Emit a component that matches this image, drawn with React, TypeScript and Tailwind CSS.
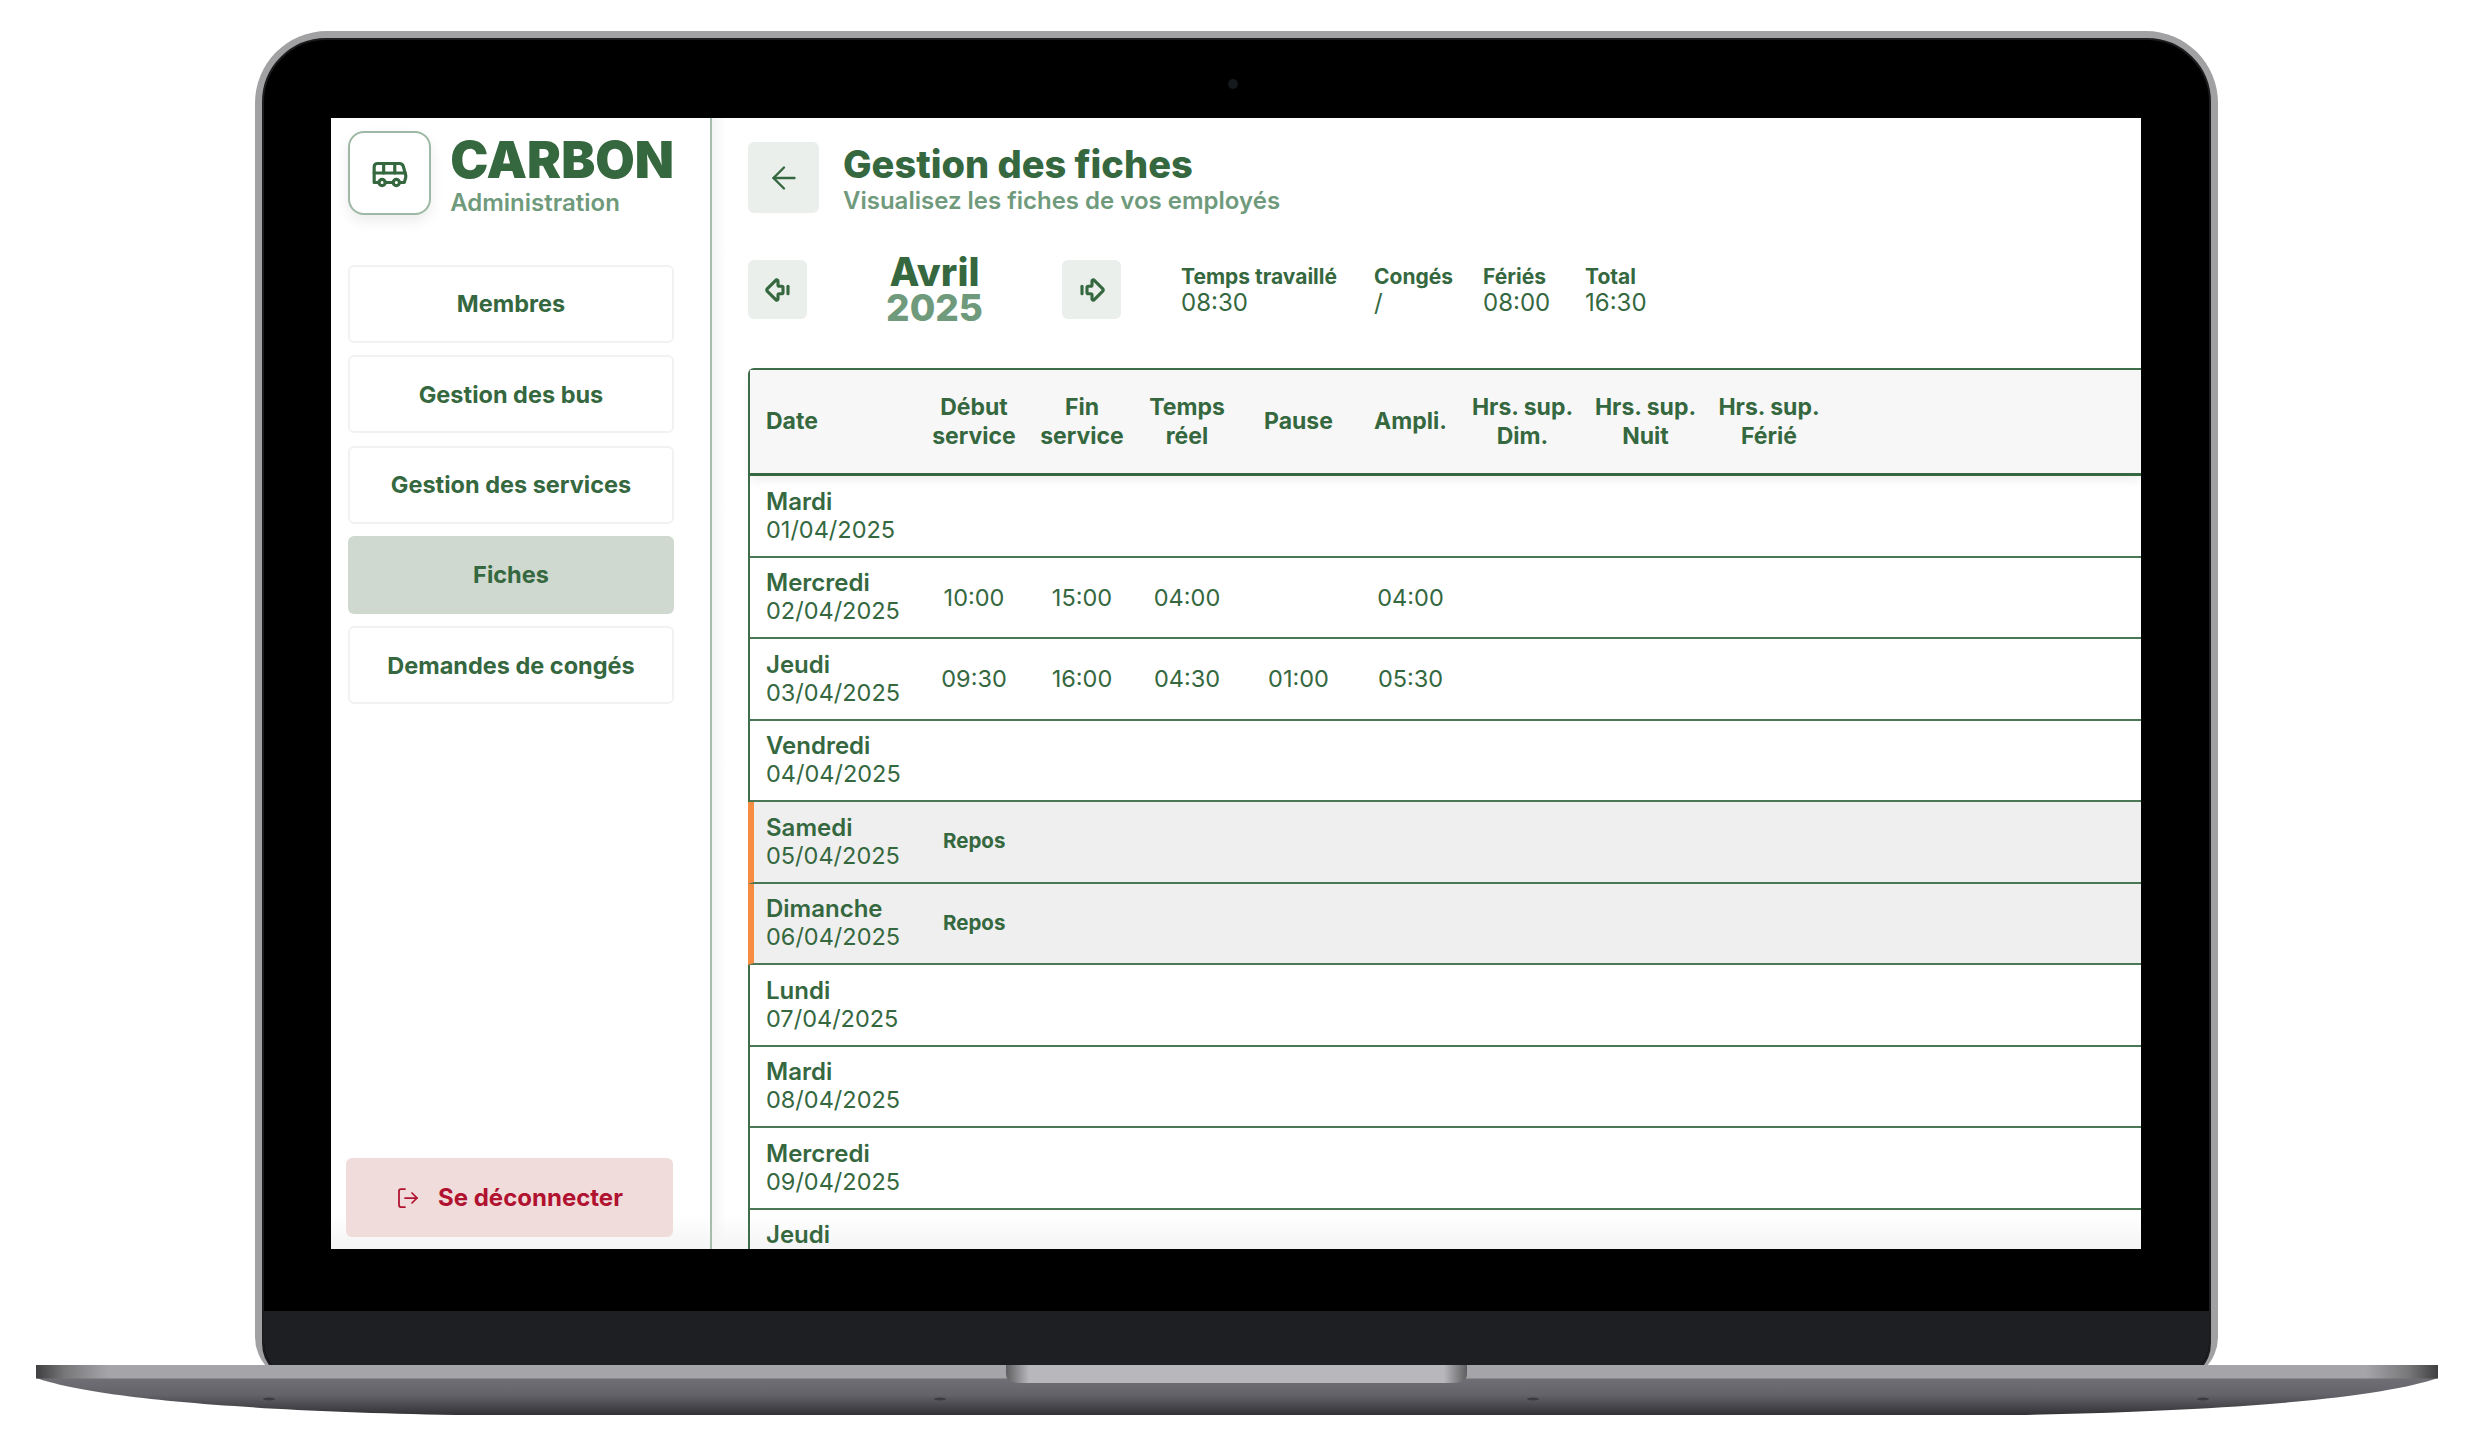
import { ArrowBigLeftDash, ArrowBigRightDash, ArrowLeft, Bus, LogOut } from "lucide-react";

const nav = ["Membres", "Gestion des bus", "Gestion des services", "Fiches", "Demandes de congés"];
const cols = "grid grid-cols-[171px_106px_110px_100px_123px_101px_123px_123px_124px_1fr]";
const heads: [string, string?][] = [["Début", "service"], ["Fin", "service"], ["Temps", "réel"], ["Pause"], ["Ampli."], ["Hrs. sup.", "Dim."], ["Hrs. sup.", "Nuit"], ["Hrs. sup.", "Férié"]];
const rows: { d: string; n: string; v?: string[]; rest?: boolean }[] = [
  { d: "Mardi", n: "01/04/2025" },
  { d: "Mercredi", n: "02/04/2025", v: ["10:00", "15:00", "04:00", "", "04:00"] },
  { d: "Jeudi", n: "03/04/2025", v: ["09:30", "16:00", "04:30", "01:00", "05:30"] },
  { d: "Vendredi", n: "04/04/2025" },
  { d: "Samedi", n: "05/04/2025", rest: true },
  { d: "Dimanche", n: "06/04/2025", rest: true },
  { d: "Lundi", n: "07/04/2025" },
  { d: "Mardi", n: "08/04/2025" },
  { d: "Mercredi", n: "09/04/2025" },
  { d: "Jeudi", n: "10/04/2025" },
];
const stats = [
  ["Temps travaillé", "08:30", "w-[193px]"],
  ["Congés", "/", "w-[109px]"],
  ["Fériés", "08:00", "w-[102px]"],
  ["Total", "16:30", "w-[80px]"],
];

function Base() {
  return (
    <svg width="2402" height="52" viewBox="0 0 2402 52" className="block relative -mt-[16px] ml-[36px]">
      <defs>
        <linearGradient id="low" x1="0" y1="0" x2="0" y2="1">
          <stop offset="0" stopColor="#716f76" />
          <stop offset="0.45" stopColor="#64636a" />
          <stop offset="1" stopColor="#323236" />
        </linearGradient>
        <linearGradient id="top" x1="0" y1="0" x2="1" y2="0">
          <stop offset="0" stopColor="#3f3f41" />
          <stop offset="0.012" stopColor="#77777a" />
          <stop offset="0.03" stopColor="#a5a4a8" />
          <stop offset="0.97" stopColor="#a5a4a8" />
          <stop offset="0.988" stopColor="#77777a" />
          <stop offset="1" stopColor="#3f3f41" />
        </linearGradient>
        <linearGradient id="notch" x1="0" y1="0" x2="1" y2="0">
          <stop offset="0" stopColor="#5e5e60" />
          <stop offset="0.05" stopColor="#b8b7bc" />
          <stop offset="0.95" stopColor="#b8b7bc" />
          <stop offset="1" stopColor="#5e5e60" />
        </linearGradient>
      </defs>
      <path d="M0 13 C50 30 170 45 420 50 H1982 C2232 45 2352 30 2402 13 Z" fill="url(#low)" />
      <rect x="0" y="0" width="2402" height="13.5" fill="url(#top)" />
      <path d="M970 0 H1431 V9 Q1431 18 1416 18 H985 Q970 18 970 9 Z" fill="url(#notch)" />
      <g fill="#3c3c40">
        <ellipse cx="233" cy="34" rx="6" ry="1.5" />
        <ellipse cx="904" cy="34" rx="6" ry="1.5" />
        <ellipse cx="1497" cy="34" rx="6" ry="1.5" />
        <ellipse cx="2167" cy="34" rx="6" ry="1.5" />
      </g>
    </svg>
  );
}

function Sidebar() {
  return (
    <aside className="w-[381px] shrink-0 h-full flex flex-col pl-[17px] pr-[36px] pt-[13px] pb-[12px] border-r-2 border-[#a6bdab] bg-linear-to-b from-white from-[97%] to-[#f4f4f4]">
      <div className="flex items-start">
        <div className="w-[84px] h-[84px] rounded-[16px] border-2 border-[#9db8a4] bg-white flex items-center justify-center shadow-[0_6px_14px_rgba(0,0,0,0.08)]">
          <Bus size={38} strokeWidth={2} className="text-[#35683f]" />
        </div>
        <div className="ml-[19px] flex flex-col whitespace-nowrap">
          <span className="text-[51px] leading-[50px] mt-[4px] font-black text-[#35683f]">CARBON</span>
          <span className="text-[24px] leading-[28px] mt-[4px] font-semibold text-[#6f9a7c]">Administration</span>
        </div>
      </div>
      <nav className="mt-[48px] flex flex-col gap-[12.3px]">
        {nav.map((n) => (
          <div
            key={n}
            className={`h-[78px] flex items-center justify-center rounded-[6px] text-[23.5px] font-bold text-[#35683f] ${n === "Fiches" ? "bg-[#cfd9d0]" : "bg-white border-2 border-[#f0f3f1]"}`}
          >
            {n}
          </div>
        ))}
      </nav>
      <button className="mt-auto -ml-[2px] w-[327px] h-[79px] shrink-0 rounded-[6px] bg-[#f1dcdc] flex items-center justify-center gap-[18px] text-[24px] font-bold text-[#b0122f]">
        <LogOut size={24} strokeWidth={1.75} />
        Se déconnecter
      </button>
    </aside>
  );
}

function Table() {
  return (
    <div className="mt-[49px] rounded-tl-[6px] border-t-2 border-l-2 border-[#3f6e4a]">
      <div className={`${cols} h-[106px] items-center bg-[#f7f7f7] border-b-[3px] border-[#35683f] shadow-[0_4px_10px_rgba(0,0,0,0.07)] relative text-[23px] leading-[29px] font-bold text-[#35683f]`}>
        <div className="pl-[16px]">Date</div>
        {heads.map((h, i) => (
          <div key={i} className="text-center">
            <div>{h[0]}</div>
            {h[1] && <div>{h[1]}</div>}
          </div>
        ))}
      </div>
      {rows.map((r, i) => (
        <div key={i} className={`${cols} h-[81.5px] items-center border-b-2 border-[#4a7755] text-[#35683f] ${r.rest ? "bg-[#efefef] border-l-[6px] border-l-[#f78c43] -ml-[2px]" : ""}`}>
          <div className={r.rest ? "pl-[12px] leading-[28px]" : "pl-[16px] leading-[28px]"}>
            <div className="text-[24px] font-semibold">{r.d}</div>
            <div className="text-[23.5px] font-normal">{r.n}</div>
          </div>
          {r.rest && <div className="pl-[18px] text-[20.5px] font-bold">Repos</div>}
          {r.v?.map((v, j) => (
            <div key={j} className="text-center text-[23.5px]">{v}</div>
          ))}
        </div>
      ))}
    </div>
  );
}

function Main() {
  return (
    <main className="relative flex-1 min-w-0 h-full pl-[36px] pt-[24px] bg-linear-to-b from-white from-[97%] to-[#f4f4f4]">
      <div className="absolute left-0 top-0 bottom-0 w-[14px] bg-linear-to-r from-[#f4f4f4] to-transparent" />
      <header className="relative h-[71px] flex items-start gap-[24px]">
        <div className="w-[71px] h-[71px] rounded-[6px] bg-[#ebefec] flex items-center justify-center">
          <ArrowLeft size={36} strokeWidth={1.6} className="text-[#35683f]" />
        </div>
        <div className="flex flex-col pt-[1px]">
          <span className="text-[38px] leading-[42px] font-extrabold text-[#35683f]">Gestion des fiches</span>
          <span className="text-[24px] leading-[32px] font-semibold text-[#6f9a7c]">Visualisez les fiches de vos employés</span>
        </div>
      </header>
      <section className="relative mt-[47px] h-[59px] flex items-center">
        <div className="w-[59px] h-[59px] rounded-[6px] bg-[#ebefec] flex items-center justify-center">
          <ArrowBigLeftDash size={30} strokeWidth={2.5} className="text-[#35683f]" />
        </div>
        <div className="w-[255px] text-center font-extrabold">
          <div className="text-[39px] leading-[36px] text-[#35683f]">Avril</div>
          <div className="text-[37px] leading-[36px] text-[#6f9a7c]">2025</div>
        </div>
        <div className="w-[59px] h-[59px] rounded-[6px] bg-[#ebefec] flex items-center justify-center">
          <ArrowBigRightDash size={30} strokeWidth={2.5} className="text-[#35683f]" />
        </div>
        <div className="ml-[60px] flex text-[#35683f]">
          {stats.map(([a, b, w]) => (
            <div key={a} className={w}>
              <div className="text-[21px] leading-[26px] font-bold whitespace-nowrap">{a}</div>
              <div className="text-[24px] leading-[26px]">{b}</div>
            </div>
          ))}
        </div>
      </section>
      <div className="relative">
        <Table />
      </div>
    </main>
  );
}

export default function App() {
  return (
    <div className="w-[2475px] h-[1456px] overflow-hidden bg-white pt-[31px] font-[family-name:Inter,sans-serif]">
      <div className="ml-[255px] w-[1963px] h-[1350px] rounded-t-[72px] rounded-b-[44px] bg-[#a1a1a3] p-[7px] pb-[0px] overflow-hidden">
        <div className="relative h-full rounded-t-[64px] rounded-b-[38px] bg-black flex flex-col overflow-hidden border-[2px] border-[#1d1d1f]">
          <div className="absolute left-[964px] top-[39px] w-[10px] h-[10px] rounded-full bg-[#15181c]" />
          <div className="mt-[78px] ml-[67px] w-[1810px] h-[1131px] flex overflow-hidden relative shrink-0">
            <Sidebar />
            <Main />
          </div>
          <div className="mt-[62px] flex-1 bg-[#1e1f23]" />
        </div>
      </div>
      <Base />
    </div>
  );
}
